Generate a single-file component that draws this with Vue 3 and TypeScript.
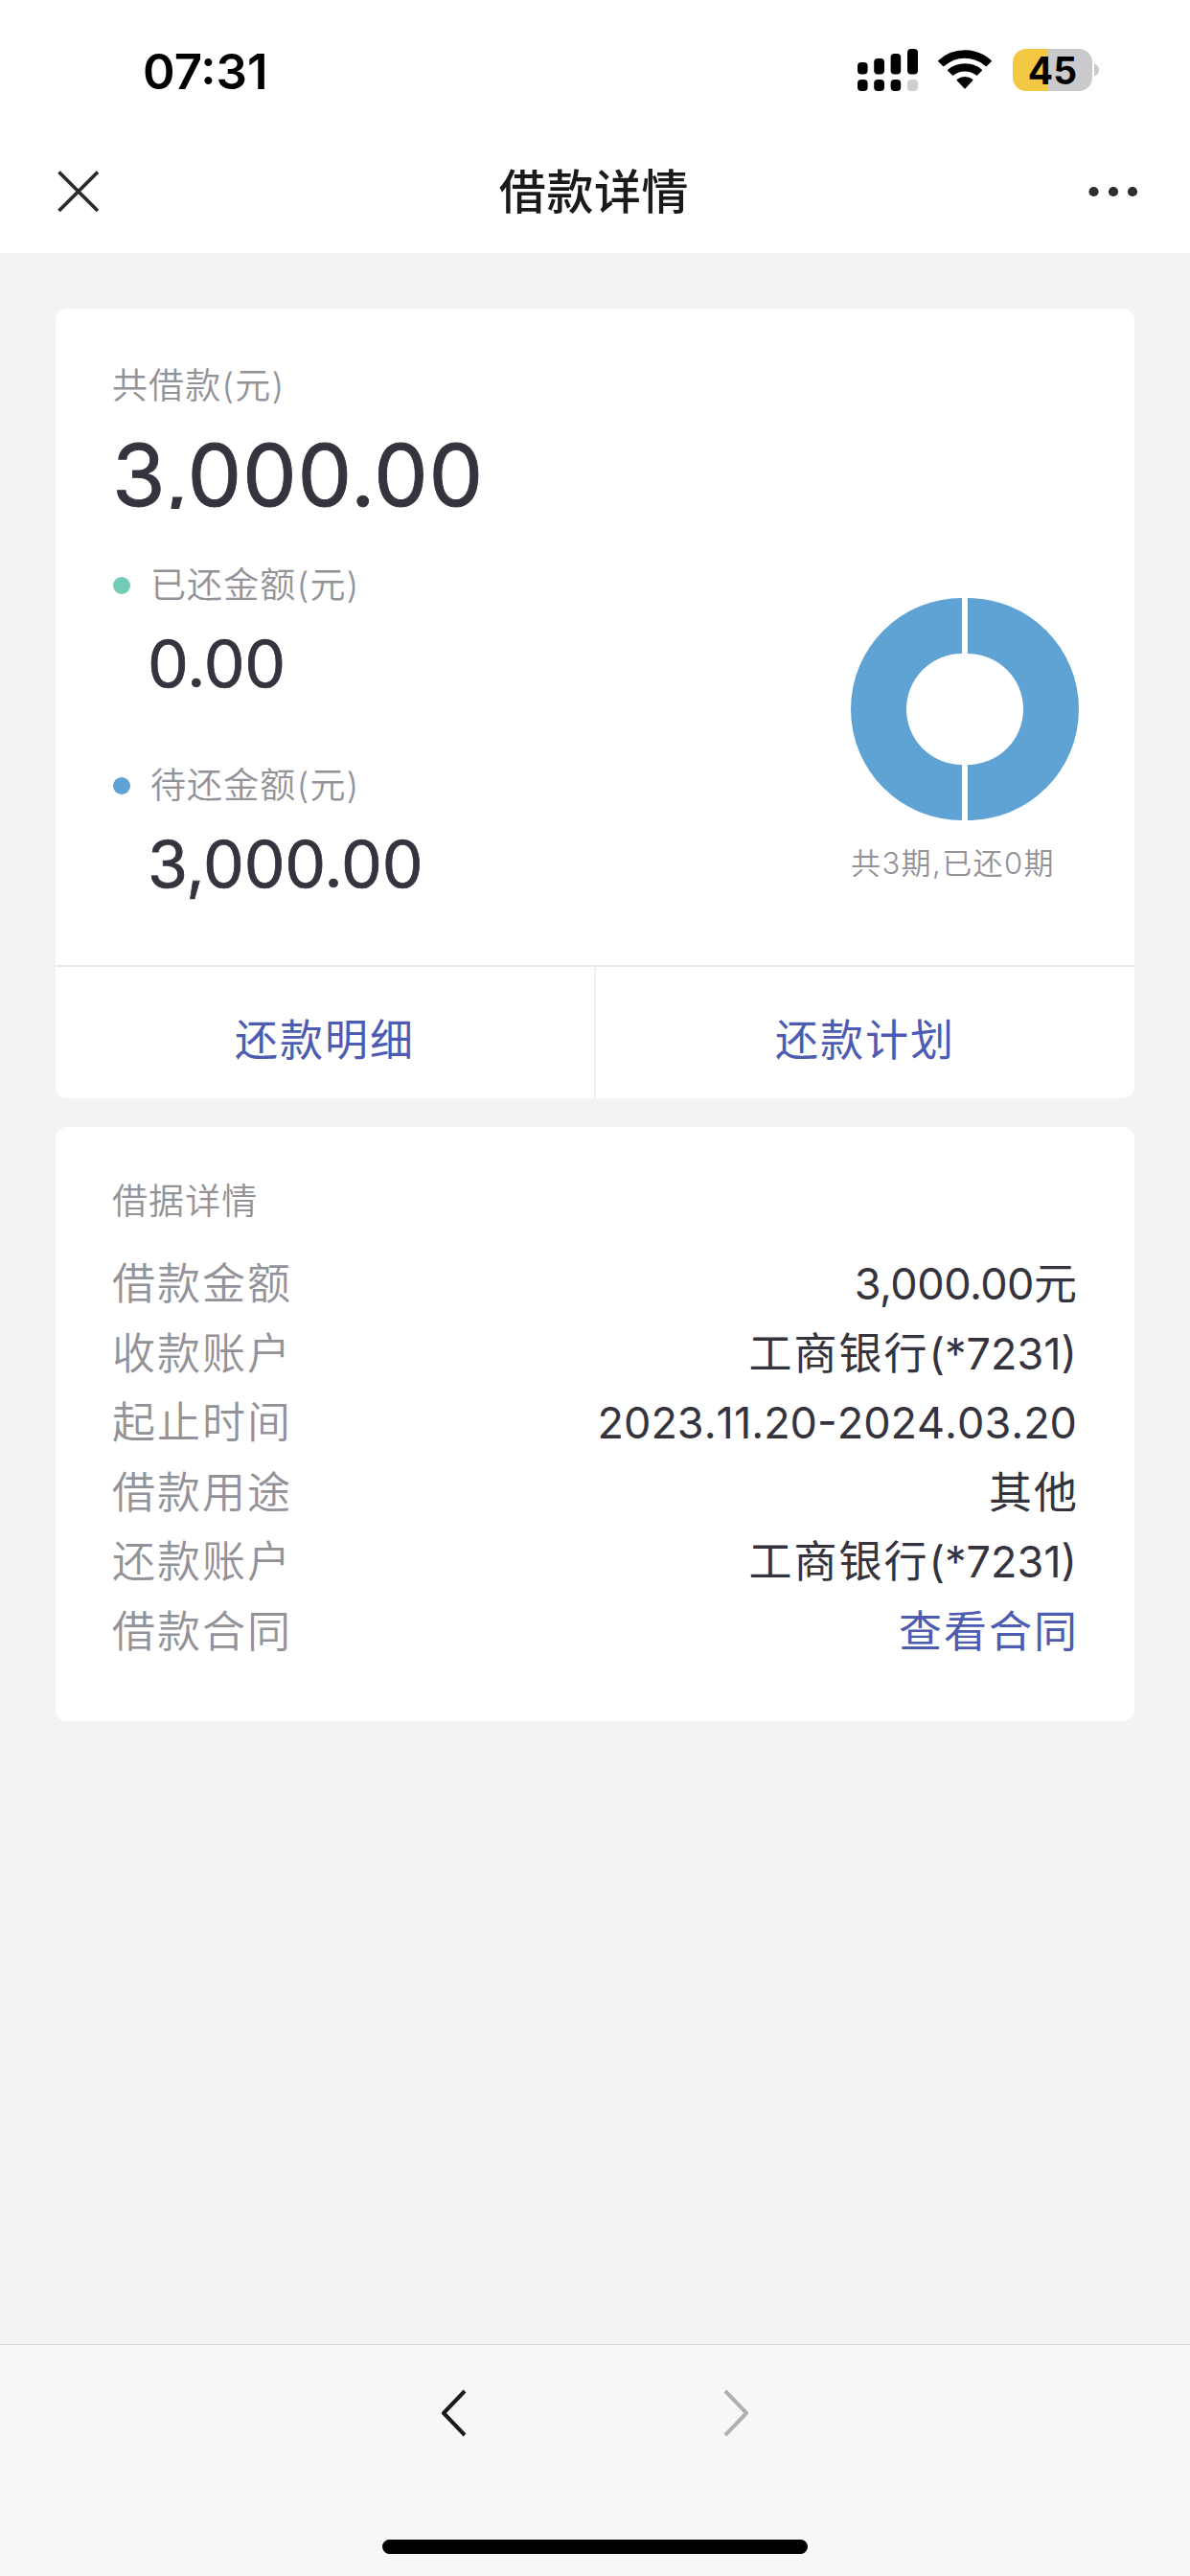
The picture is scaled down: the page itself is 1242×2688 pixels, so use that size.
<script setup lang="ts">
interface Part {
  text: string
  kind: 'han' | 'money' | 'card' | 'date'
}

interface Detail {
  label: string
  value: Part[]
  link?: boolean
}

const bank: Part[] = [
  { text: '工商银行', kind: 'han' },
  { text: '(*7231)', kind: 'card' },
]

const summary = [
  { label: '已还金额(元)', value: '0.00', tone: 'paid' },
  { label: '待还金额(元)', value: '3,000.00', tone: 'due' },
]

const details: Detail[] = [
  {
    label: '借款金额',
    value: [
      { text: '3,000.00', kind: 'money' },
      { text: '元', kind: 'han' },
    ],
  },
  { label: '收款账户', value: bank },
  { label: '起止时间', value: [{ text: '2023.11.20-2024.03.20', kind: 'date' }] },
  { label: '借款用途', value: [{ text: '其他', kind: 'han' }] },
  { label: '还款账户', value: bank },
  { label: '借款合同', value: [{ text: '查看合同', kind: 'han' }], link: true },
]
</script>

<template>
  <div class="screen">
    <header class="top">
      <div class="status">
        <span class="time">07:31</span>
        <div class="indicators">
          <svg class="signal" width="63" height="44" viewBox="0 0 63 44">
            <rect x="0" y="14" width="10.6" height="12.4" rx="4" />
            <rect x="17.2" y="10" width="10.8" height="16.4" rx="4" />
            <rect x="34.6" y="5" width="10.6" height="21.4" rx="4" />
            <rect x="52" y="0" width="11" height="26.4" rx="4" />
            <rect x="0" y="32" width="10.6" height="12" rx="4" />
            <rect x="17.2" y="32" width="10.8" height="12" rx="4" />
            <rect x="34.6" y="32" width="10.6" height="12" rx="4" />
            <rect x="52" y="32" width="11" height="12" rx="4" fill="#cfcfcf" />
          </svg>
          <svg class="wifi" width="56" height="44" viewBox="0 0 56 44">
            <path d="M0.3 13.2Q-.2 12.5.4 12Q12 1.3 28 1.3T55.6 12Q56.2 12.5 55.7 13.2L50.9 18Q50.3 18.5 49.6 18Q40 9.8 28 9.8T6.4 18Q5.7 18.5 5.1 18Z" />
            <path d="M10.1 22.8Q9.6 22.3 10.2 21.7Q17.6 15.2 28 15.2T45.8 21.7Q46.4 22.3 45.9 22.8L41.1 27.6Q40.5 28.2 39.8 27.6Q34.6 23.6 28 23.6T16.2 27.6Q15.5 28.2 14.9 27.6Z" />
            <path d="M19.7 32.9Q19.3 32.3 19.9 31.8Q23.3 29.1 28 29.1T36.1 31.8Q36.7 32.3 36.3 32.9L28.6 41.3Q28 41.9 27.4 41.3Z" />
          </svg>
          <div class="battery"><span>45</span></div>
          <svg class="nub" width="6" height="14" viewBox="0 0 6 14">
            <path d="M0 0.5C3 1.5 5 4 5 7S3 12.5 0 13.5Z" fill="#cacacc" />
          </svg>
        </div>
      </div>
      <nav class="nav">
        <svg width="44" height="44" viewBox="0 0 44 44">
          <path d="M1.5 1.5L42 42M42 1.5L1.5 42" stroke="#2b2b2b" stroke-width="3.8" />
        </svg>
        <h1>借款详情</h1>
        <svg width="52" height="12" viewBox="0 0 52 12" fill="#2d2d2d">
          <circle cx="5.5" cy="6" r="5.1" />
          <circle cx="26" cy="6" r="5.1" />
          <circle cx="46" cy="6" r="5.1" />
        </svg>
      </nav>
    </header>

    <main class="content">
      <section class="card">
        <div class="overview">
          <div class="amounts">
            <div class="label">共借款(元)</div>
            <div class="total">3,000.00</div>
            <div v-for="item in summary" :key="item.tone" class="item">
              <div class="label row"><i :class="['dot', item.tone]"></i>{{ item.label }}</div>
              <div class="amount">{{ item.value }}</div>
            </div>
          </div>
          <div class="chart">
            <svg width="238" height="232" viewBox="0 0 238 232" fill="#5fa3d4">
              <path d="M116 0A116 116 0 0 0 116 232V174A58 58 0 0 1 116 58Z" />
              <path d="M122 0A116 116 0 0 1 122 232V174A58 58 0 0 0 122 58Z" />
            </svg>
            <div class="caption">共3期,已还0期</div>
          </div>
        </div>
        <div class="actions">
          <a>还款明细</a>
          <a>还款计划</a>
        </div>
      </section>

      <section class="card details">
        <div class="label">借据详情</div>
        <dl>
          <div v-for="d in details" :key="d.label" class="line">
            <dt>{{ d.label }}</dt>
            <dd :class="{ link: d.link }"><span v-for="p in d.value" :key="p.text" :class="p.kind">{{ p.text }}</span></dd>
          </div>
        </dl>
      </section>
    </main>

    <footer class="bottom">
      <div class="arrows">
        <svg width="28" height="52" viewBox="0 0 28 52" fill="none">
          <path d="M25 3L3 26L25 49" stroke="#1a1a1a" stroke-width="4" stroke-linejoin="round" />
        </svg>
        <svg width="28" height="52" viewBox="0 0 28 52" fill="none">
          <path d="M3 3L25 26L3 49" stroke="#b0b0b0" stroke-width="4" stroke-linejoin="round" />
        </svg>
      </div>
      <div class="home"></div>
    </footer>
  </div>
</template>

<style>
body {
  margin: 0;
  background: #f2f3f5;
}
</style>

<style scoped>
.screen {
  width: 1242px;
  height: 2688px;
  display: flex;
  flex-direction: column;
  background: #f2f3f5;
  font-family: Inter, "Noto Sans CJK SC", sans-serif;
  color: #35343e;
  overflow: hidden;
}
svg {
  display: block;
  flex: none;
}
.top {
  height: 264px;
  background: #fff;
}
.status {
  height: 146px;
  box-sizing: border-box;
  padding: 0 94px 0 149px;
  display: flex;
  align-items: center;
  justify-content: space-between;
}
.time {
  font-size: 51px;
  line-height: 60px;
  font-weight: 600;
  color: #000;
  margin-top: 3px;
}
.indicators {
  display: flex;
  align-items: center;
}
.wifi {
  margin-left: 21px;
}
.battery {
  width: 83px;
  height: 44px;
  margin-left: 22px;
  border-radius: 14px;
  background: linear-gradient(to right, #f3c944 37px, #cacacc 37px);
  color: #000;
  font-size: 39px;
  line-height: 45px;
  font-weight: 700;
  text-align: center;
}
.nub {
  margin-left: 2px;
}
.nav {
  height: 108px;
  padding: 0 54px 0 60px;
  display: flex;
  align-items: center;
  justify-content: space-between;
}
.nav h1 {
  margin: 2px 0 0;
  font-size: 49px;
  line-height: 60px;
  font-weight: 500;
  color: #1a1a1a;
  letter-spacing: 0.6px;
}
.content {
  flex: 1;
  padding: 58px 58px 0;
}
.card {
  background: #fff;
  border-radius: 12px;
  overflow: hidden;
}
.overview {
  height: 685px;
  box-sizing: border-box;
  display: flex;
  justify-content: space-between;
  padding: 55px 58px 0 59px;
}
.label {
  font-size: 37px;
  line-height: 52px;
  letter-spacing: 1.1px;
  color: #929298;
  font-weight: 350;
}
.total {
  margin-top: 30px;
  height: 72px;
  line-height: 74px;
  font-size: 90px;
  font-weight: 400;
  letter-spacing: 0.7px;
  -webkit-text-stroke: 0.9px #35343e;
  overflow: hidden;
}
.item {
  height: 155px;
  margin-top: 54px;
}
.row {
  display: flex;
  align-items: center;
}
.dot {
  width: 18px;
  height: 18px;
  border-radius: 50%;
  margin: 0 21px 0 1px;
}
.paid {
  background: #73cbb8;
}
.due {
  background: #5fa3d4;
}
.amount {
  margin: 21px 0 0 37px;
  font-size: 68px;
  line-height: 68px;
  font-weight: 400;
  letter-spacing: -0.2px;
  -webkit-text-stroke: 0.7px #35343e;
}
.chart {
  margin-top: 247px;
  width: 238px;
}
.caption {
  margin-top: 23px;
  font-size: 31px;
  line-height: 44px;
  letter-spacing: 1.4px;
  font-weight: 350;
  color: #929298;
  white-space: nowrap;
}
.actions {
  display: flex;
  height: 139px;
  box-sizing: border-box;
  border-top: 2px solid #ebebee;
}
.actions a {
  flex: 1;
  box-sizing: border-box;
  padding-top: 45px;
  text-align: center;
  font-size: 45px;
  line-height: 64px;
  letter-spacing: 2px;
  color: #4d5bb2;
}
.actions a + a {
  border-left: 2px solid #f0f0f2;
}
.details {
  margin-top: 30px;
  height: 620px;
  box-sizing: border-box;
  padding: 52px 60px 0 59px;
}
dl {
  margin: 24px 0 0;
}
.line {
  display: flex;
  justify-content: space-between;
  font-size: 45px;
  line-height: 72.6px;
  white-space: nowrap;
}
dt {
  color: #929298;
  letter-spacing: 2px;
  font-weight: 350;
}
dd {
  margin: 0;
  display: flex;
}
.han {
  letter-spacing: 2px;
}
.han:last-child {
  margin-right: -2px;
}
.money {
  letter-spacing: -0.5px;
}
.date {
  font-kerning: none;
}
.link {
  color: #4d5bb2;
}
.bottom {
  height: 242px;
  box-sizing: border-box;
  border-top: 1px solid #d6d7d9;
  background: #f7f7f7;
  display: flex;
  flex-direction: column;
  align-items: center;
  justify-content: space-between;
  padding: 45px 0 23px;
}
.arrows {
  width: 322px;
  display: flex;
  justify-content: space-between;
}
.home {
  width: 444px;
  height: 15px;
  border-radius: 8px;
  background: #000;
}
</style>
